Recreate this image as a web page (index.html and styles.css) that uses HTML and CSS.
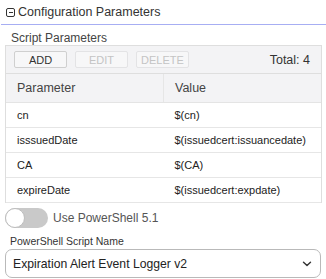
FILE: index.html
```html
<!DOCTYPE html>
<html lang="en">

<head>
  <meta charset="UTF-8">
  <meta name="viewport" content="width=device-width, initial-scale=1.0">
  <title>Configuration Parameters</title>
  <link rel="stylesheet" href="styles.css">
</head>

<body>
  <div class="config">
    <header class="section-head">
      <span class="collapse-icon"></span>
      <h2>Configuration Parameters</h2>
    </header>

    <div class="panel">
      <div class="field-label">Script Parameters</div>

      <div class="grid">
        <div class="toolbar">
          <button class="btn">ADD</button>
          <button class="btn" disabled>EDIT</button>
          <button class="btn" disabled>DELETE</button>
          <span class="total">Total: 4</span>
        </div>

        <table class="params">
          <thead>
            <tr>
              <th>Parameter</th>
              <th>Value</th>
            </tr>
          </thead>
          <tbody>
            <tr>
              <td>cn</td>
              <td>$(cn)</td>
            </tr>
            <tr>
              <td>isssuedDate</td>
              <td>$(issuedcert:issuancedate)</td>
            </tr>
            <tr>
              <td>CA</td>
              <td>$(CA)</td>
            </tr>
            <tr>
              <td>expireDate</td>
              <td>$(issuedcert:expdate)</td>
            </tr>
          </tbody>
        </table>
      </div>

      <label class="switch-row">
        <span class="switch"><span class="knob"></span></span>
        <span>Use PowerShell 5.1</span>
      </label>

      <div class="field-label script-label">PowerShell Script Name</div>
      <div class="select">
        <span>Expiration Alert Event Logger v2</span>
        <svg width="10" height="6" viewBox="0 0 10 6">
          <path d="M1.5 1.2 L5 4.6 L8.5 1.2" fill="none" stroke="#333" stroke-width="1.4" stroke-linecap="round" stroke-linejoin="round"/>
        </svg>
      </div>
    </div>
  </div>
</body>

</html>
```

FILE: styles.css
```css
body {
  font-family: "Liberation Sans", Arial, sans-serif;
  background-color: #fff;
  color: #333;
  margin: 0;
}
.config {
  width: 326px;
}
.section-head {
  display: flex;
  align-items: center;
  height: 24px;
  margin-left: 1px;
  padding-left: 5px;
  border-bottom: 1px solid #a7aef3;
}
.section-head h2 {
  margin: 0 0 0 3px;
  font-size: 12.5px;
  font-weight: normal;
  color: #333;
}
.collapse-icon {
  position: relative;
  width: 7px;
  height: 7px;
  border: 1.3px solid #333;
  border-radius: 2px;
}
.collapse-icon::after {
  content: "";
  position: absolute;
  left: 1.5px;
  right: 1.5px;
  top: 3px;
  height: 1.3px;
  background-color: #333;
}
.panel {
  padding: 0 4px 0 5px;
}
.field-label {
  margin-top: 6px;
  padding-left: 6px;
  height: 14px;
  line-height: 14px;
  font-size: 12px;
  color: #444;
}
.grid {
  border: 1px solid #dedede;
  border-bottom: none;
  background-color: #f3f3f5;
}
.toolbar {
  display: flex;
  align-items: center;
  gap: 8px;
  height: 27px;
  padding: 0 11px 0 8px;
}
.btn {
  width: 53px;
  height: 17px;
  padding: 0;
  font-family: inherit;
  font-size: 11px;
  color: #333;
  background-color: #f7f7f8;
  border: 1px solid #cfcfcf;
  border-radius: 2px;
}
.btn:disabled {
  color: #c4c4c4;
  border-color: #e3e3e5;
}
.total {
  margin-left: auto;
  font-size: 12.5px;
  color: #333;
}
.params {
  width: 100%;
  border-collapse: collapse;
  table-layout: fixed;
}
.params th {
  height: 28px;
  padding: 0 0 0 11px;
  text-align: left;
  font-size: 12.5px;
  font-weight: normal;
  color: #444;
  border-top: 1px solid #dedede;
  border-bottom: 1px solid #e4e4e4;
}
.params th + th {
  border-left: 1px solid #e6e6e6;
}
.params td {
  height: 24px;
  padding: 0 0 0 11px;
  font-size: 11px;
  color: #222;
  background-color: #fff;
  border-bottom: 1px solid #e6e6e6;
}
.switch-row {
  display: flex;
  align-items: center;
  gap: 5px;
  margin-top: 5px;
  height: 20px;
  font-size: 12px;
  color: #555;
}
.switch {
  display: flex;
  width: 43px;
  height: 20px;
  border-radius: 10px;
  background-color: #c9c9c9;
}
.knob {
  width: 18px;
  height: 18px;
  border: 1px solid #bdbdbd;
  border-radius: 50%;
  background-color: #fff;
}
.script-label {
  margin-top: 6px;
  padding-left: 5px;
  font-size: 10.5px;
  color: #333;
}
.select {
  display: flex;
  align-items: center;
  justify-content: space-between;
  margin: 1px 1px 0 0;
  height: 27px;
  padding: 0 8px 0 7px;
  border: 1px solid #b9b9b9;
  border-radius: 7px;
  font-size: 12.2px;
  color: #222;
}
```
